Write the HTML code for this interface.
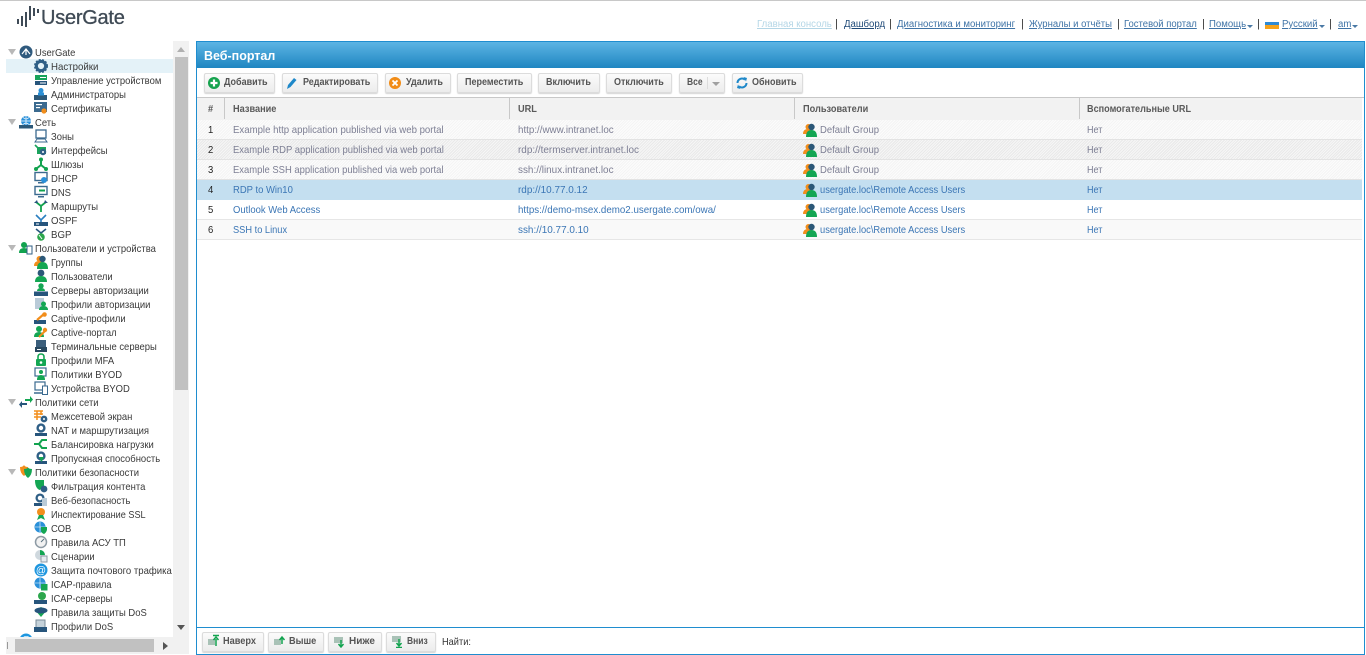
<!DOCTYPE html>
<html lang="ru"><head><meta charset="utf-8"><title>UserGate</title>
<style>
html,body{margin:0;padding:0;width:1366px;height:655px;overflow:hidden;background:#fff;font-family:"Liberation Sans",Arial,sans-serif;font-size:10.5px;color:#333}
div,span,a,svg{position:absolute;white-space:nowrap}
.r{left:6px;width:168px;height:14px;line-height:14px;color:#3a3a3a}
.r .t{left:45px;top:1px;transform:scaleX(.9);transform-origin:0 0}
.r.p .t{left:29px}
.r svg{left:28px;top:0;width:14px;height:14px}
.r.p svg{left:13px}
.r i{position:absolute;left:2px;top:4px;width:0;height:0;border:4px solid transparent;border-top:6px solid #b8b8b8;border-bottom:0}
.n{top:18px;line-height:14px;font-size:10px;color:#3f73a6;text-decoration:underline;transform:scaleX(.96);transform-origin:0 0}
.s{top:17px;line-height:14px;font-size:11px;color:#333}
.c{width:0;height:0;top:25px;border:3px solid transparent;border-top:3px solid #4a79a5;border-bottom:0}
.b{top:73px;height:18px;line-height:18px;border:1px solid #dcdcdc;border-radius:2px;background:linear-gradient(#fbfbfb,#ececec);box-shadow:0 1px 1px #d5d5d5;font-weight:bold;color:#555;font-size:10px}
.b span{top:0;transform:scaleX(.9);transform-origin:0 0}
.b svg{top:2px;left:2px;width:14px;height:14px}
.row{left:197px;width:1165px;height:20px;line-height:20px;font-size:10.3px}
.row span{top:1px;transform:scaleX(.92);transform-origin:0 0}
.row svg{left:606px;top:3px;width:14px;height:14px}
.h1{left:11px;color:#222}
.h2{left:36px}.h3{left:321px}.h4{left:623px}.h5{left:890px}
.row .h3{transform:scaleX(.965)}
.row .h5{transform:scaleX(.88)}
.off{color:#7d7f94;background:repeating-linear-gradient(135deg,#f4f4f4 0 1px,#fcfcfc 1px 2px);border-bottom:1px solid #e3e3e3;height:19px}
.off2{background:repeating-linear-gradient(135deg,#e9e9e9 0 1px,#f6f6f6 1px 2px)}
.on{color:#3b76b5;border-bottom:1px solid #e6e6e6;height:19px}
.th{top:99px;height:22px;line-height:21px;font-weight:bold;color:#5a5a5a;font-size:10px;transform:scaleX(.92);transform-origin:0 0}
.sep{top:98px;width:1px;height:21px;background:#c8c8c8}
.f{top:632px;height:18px;line-height:18px;border:1px solid #dcdcdc;border-radius:2px;background:linear-gradient(#fbfbfb,#ececec);box-shadow:0 1px 1px #d5d5d5;font-weight:bold;color:#555;font-size:10px}
.f span{top:0;transform:scaleX(.92);transform-origin:0 0}.f svg{left:4px;top:1px;width:14px;height:14px}
</style></head><body>
<svg width="0" height="0" style="left:0;top:0">
<defs>
<symbol id="gear" viewBox="0 0 14 14"><circle cx="7" cy="7" r="4.6" fill="none" stroke="#2f5f86" stroke-width="3"/><circle cx="7" cy="7" r="6.3" fill="none" stroke="#2f5f86" stroke-width="1.4" stroke-dasharray="2 1.4"/></symbol>
<symbol id="srv" viewBox="0 0 14 14"><rect x="1" y="2" width="12" height="5" fill="#17a35a"/><rect x="1" y="8" width="12" height="4" fill="#27557c"/><rect x="6" y="4" width="6" height="1" fill="#fff"/><rect x="6" y="9.5" width="6" height="1" fill="#fff"/></symbol>
<symbol id="adm" viewBox="0 0 14 14"><rect x="0" y="8" width="13" height="5" fill="#2c5878"/><circle cx="7" cy="3.5" r="2.5" fill="#2a8fd6"/><rect x="4" y="5.5" width="6" height="3" fill="#2a8fd6"/></symbol>
<symbol id="cert" viewBox="0 0 14 14"><rect x="0" y="1" width="13" height="10" fill="#3b6a8f"/><rect x="2" y="3" width="6" height="1.2" fill="#fff"/><rect x="2" y="6" width="4" height="1.2" fill="#fff"/><circle cx="10" cy="10" r="2.6" fill="#f28e1c"/></symbol>
<symbol id="ug" viewBox="0 0 14 14"><circle cx="7" cy="7" r="6.5" fill="#2f5a7e"/><path d="M3 9l4-5 4 5M7 4v6" stroke="#fff" stroke-width="1.2" fill="none"/></symbol>
<symbol id="net" viewBox="0 0 14 14"><circle cx="7" cy="6" r="5" fill="#2a90d9"/><path d="M2 6h10M7 1v10M4 2.5q3 3 6 0M4 9.5q3-3 6 0" stroke="#fff" stroke-width=".7" fill="none"/><rect x="0" y="10" width="14" height="3.5" fill="#2c5878"/></symbol>
<symbol id="zone" viewBox="0 0 14 14"><rect x="2" y="1" width="10" height="8" fill="#fff" stroke="#3b6a8f" stroke-width="1.3"/><path d="M1 13l2-3h8l2 3z" fill="#fff" stroke="#3b6a8f"/></symbol>
<symbol id="if" viewBox="0 0 14 14"><path d="M1 2l4 4" stroke="#1ba35c" stroke-width="1.6"/><rect x="3" y="4" width="9" height="7" fill="#1ba35c"/><circle cx="9" cy="9" r="3.2" fill="#2f5f86"/><circle cx="9" cy="9" r="1" fill="#fff"/></symbol>
<symbol id="gw" viewBox="0 0 14 14"><path d="M7 2v6M7 8l-5 4M7 8l5 4" stroke="#12a34f" stroke-width="2" fill="none"/><circle cx="7" cy="2.5" r="2" fill="#12a34f"/><circle cx="2" cy="12" r="2" fill="#12a34f"/><circle cx="12" cy="12" r="2" fill="#12a34f"/></symbol>
<symbol id="mon" viewBox="0 0 14 14"><rect x="1" y="1.5" width="12" height="8" fill="#fff" stroke="#3b6a8f" stroke-width="1.4"/><rect x="4" y="11" width="6" height="1.5" fill="#3b6a8f"/><circle cx="10" cy="9" r="3" fill="#2a90d9"/></symbol>
<symbol id="dns" viewBox="0 0 14 14"><rect x="1" y="1.5" width="12" height="8" fill="#fff" stroke="#3b6a8f" stroke-width="1.4"/><rect x="4" y="11" width="6" height="1.5" fill="#3b6a8f"/><path d="M5 5.5h6" stroke="#12a34f" stroke-width="2"/></symbol>
<symbol id="rt" viewBox="0 0 14 14"><path d="M7 13V7L2 3M7 7l5-4" stroke="#12a34f" stroke-width="1.8" fill="none"/><path d="M0 4l3-3 1 3zM14 4l-3-3-1 3z" fill="#27557c"/></symbol>
<symbol id="ospf" viewBox="0 0 14 14"><path d="M2 2l5 5 5-5M7 7v2" stroke="#2a7fc0" stroke-width="1.6" fill="none"/><rect x="0" y="9" width="14" height="4" fill="#27557c"/><rect x="2" y="10.5" width="3" height="1" fill="#fff"/></symbol>
<symbol id="bgp" viewBox="0 0 14 14"><path d="M2 2l5 4 5-4" stroke="#27557c" stroke-width="1.6" fill="none"/><circle cx="7" cy="10" r="3.8" fill="#2ca64c"/><path d="M5 8l3 4" stroke="#fff"/></symbol>
<symbol id="usrs" viewBox="0 0 14 14"><circle cx="5" cy="4" r="3" fill="#12a34f"/><path d="M0 12q0-5 5-5t5 5z" fill="#12a34f"/><rect x="8" y="5" width="5" height="8" fill="#fff" stroke="#2f5f86"/></symbol>
<symbol id="grp" viewBox="0 0 14 14"><circle cx="5.5" cy="4" r="3" fill="#f28e1c"/><path d="M0 11q0-5 5-5t5 5z" fill="#f28e1c"/><circle cx="8.5" cy="4" r="3.2" fill="#2c5878"/><path d="M3 14q0-7 5.5-7t5.500 7z" fill="#14a653"/></symbol>
<symbol id="usr" viewBox="0 0 14 14"><circle cx="7" cy="4" r="3.400" fill="#2c5878"/><path d="M1 13q0-6 6-6t6 6z" fill="#14a653"/></symbol>
<symbol id="usv" viewBox="0 0 14 14"><circle cx="7" cy="3" r="2.700" fill="#14a653"/><path d="M3 8q0-3 4-3t4 3z" fill="#14a653"/><rect x="0" y="8.500" width="14" height="4.500" fill="#27557c"/></symbol>
<symbol id="pa" viewBox="0 0 14 14"><rect x="1" y="1" width="9" height="11" fill="#b9cbd8"/><circle cx="9.500" cy="7" r="2.500" fill="#14a653"/><path d="M5 13q0-4 4.500-4t4.500 4z" fill="#14a653"/></symbol>
<symbol id="cp" viewBox="0 0 14 14"><rect x="0" y="9" width="12" height="4" fill="#27557c"/><path d="M3 9l7-6" stroke="#f28e1c" stroke-width="2.200"/><circle cx="10.500" cy="3.500" r="2.300" fill="#f28e1c"/></symbol>
<symbol id="cpt" viewBox="0 0 14 14"><circle cx="5" cy="4" r="3" fill="#14a653"/><path d="M0 12q0-5 5-5t5 5z" fill="#14a653"/><path d="M5 12l6-6" stroke="#f28e1c" stroke-width="2"/><circle cx="11" cy="5" r="2.200" fill="#f28e1c"/></symbol>
<symbol id="term" viewBox="0 0 14 14"><rect x="2" y="1" width="10" height="7" fill="#3b5f7c"/><rect x="1" y="8" width="12" height="5" fill="#27485f"/><rect x="3" y="10" width="4" height="1" fill="#fff"/></symbol>
<symbol id="mfa" viewBox="0 0 14 14"><path d="M4 6V4q0-3 3-3t3 3v2" stroke="#14a653" stroke-width="1.600" fill="none"/><rect x="2" y="6" width="10" height="7" rx="1" fill="#14a653"/><circle cx="7" cy="9.500" r="1.300" fill="#fff"/></symbol>
<symbol id="byod" viewBox="0 0 14 14"><rect x="1" y="1" width="11" height="8" fill="#fff" stroke="#3b6a8f" stroke-width="1.200"/><circle cx="7" cy="5" r="2" fill="#14a653"/><path d="M3 13q0-5 4-5t4 5z" fill="#14a653"/></symbol>
<symbol id="byd" viewBox="0 0 14 14"><rect x="1" y="1" width="10" height="8" fill="#fff" stroke="#3b6a8f" stroke-width="1.200"/><path d="M0 12h8" stroke="#3b6a8f" stroke-width="1.500"/><rect x="8.500" y="5" width="5" height="8.500" fill="#fff" stroke="#3b6a8f"/></symbol>
<symbol id="pol" viewBox="0 0 14 14"><path d="M6 4h5V1l3 3.500L11 8V6H6z" fill="#14a653"/><path d="M8 8H3V6l-3 3.500L3 13v-3h5z" fill="#27557c"/></symbol>
<symbol id="fw" viewBox="0 0 14 14"><path d="M0 2h9M0 5h9M0 8h7M3 2v9M7 2v4" stroke="#f28e1c" stroke-width="1.500"/><circle cx="10" cy="10" r="3.400" fill="#2f5f86"/><circle cx="10" cy="10" r="1" fill="#fff"/></symbol>
<symbol id="nat" viewBox="0 0 14 14"><circle cx="7" cy="5" r="3.400" fill="none" stroke="#2f5f86" stroke-width="2.400"/><rect x="1" y="10" width="12" height="3" fill="#27557c"/></symbol>
<symbol id="bal" viewBox="0 0 14 14"><path d="M13 3H8L5 7l3 4h5M0 7h5" stroke="#12a34f" stroke-width="2" fill="none"/></symbol>
<symbol id="bw" viewBox="0 0 14 14"><circle cx="7" cy="5" r="3.400" fill="none" stroke="#2f5f86" stroke-width="2.400"/><rect x="1" y="10" width="12" height="3" fill="#27557c"/><path d="M5 6h5l-2.500 5z" fill="#14a653"/></symbol>
<symbol id="sh" viewBox="0 0 14 14"><path d="M1 2q3 0 4-2 1 2 4 2 0 6-4 9-4-3-4-9z" fill="#f28e1c"/><path d="M5 4q3 0 4-1.500Q10 4 13 4q0 6-4 9-4-3-4-9z" fill="#14a653"/></symbol>
<symbol id="flt" viewBox="0 0 14 14"><path d="M1 1h9v6q-2 3-4.500 4Q1 9 1 1z" fill="#14a653"/><circle cx="10" cy="10" r="3.400" fill="#2f5f86"/></symbol>
<symbol id="web" viewBox="0 0 14 14"><circle cx="6" cy="5" r="3.400" fill="none" stroke="#2f5f86" stroke-width="2.300"/><rect x="0" y="10" width="8" height="3" fill="#27557c"/><rect x="8" y="5" width="5" height="8" fill="#b9cbd8"/></symbol>
<symbol id="ssl" viewBox="0 0 14 14"><circle cx="7" cy="5" r="4" fill="#f28e1c"/><path d="M3 13l2-5h4l2 5-4-2z" fill="#14a653"/></symbol>
<symbol id="ids" viewBox="0 0 14 14"><circle cx="6" cy="6" r="5.500" fill="#2a90d9"/><path d="M1 6h10M6 1v10" stroke="#fff" stroke-width=".6"/><path d="M7 6h6v3q-1 3-3 4-3-1-3-4z" fill="#14a653"/></symbol>
<symbol id="acs" viewBox="0 0 14 14"><circle cx="7" cy="7" r="5.500" fill="#f2f2f2" stroke="#8d9aa4" stroke-width="1.500"/><path d="M7 7l3-3" stroke="#59707f"/></symbol>
<symbol id="scn" viewBox="0 0 14 14"><circle cx="6" cy="6" r="5" fill="#cfd8de"/><path d="M6 6V1a5 5 0 0 1 5 5z" fill="#14a653"/><rect x="7" y="7" width="6" height="6" fill="#e6ecf0" stroke="#8d9aa4"/></symbol>
<symbol id="mail" viewBox="0 0 14 14"><circle cx="7" cy="7" r="6.500" fill="#1e96df"/><text x="7" y="10.500" text-anchor="middle" font-size="10" font-family="Liberation Sans" fill="#fff">@</text></symbol>
<symbol id="icr" viewBox="0 0 14 14"><circle cx="6" cy="6" r="5.500" fill="#2a90d9"/><path d="M1 6h10M6 1v10" stroke="#fff" stroke-width=".6"/><rect x="7" y="7" width="6.500" height="6.500" fill="#14a653"/></symbol>
<symbol id="ics" viewBox="0 0 14 14"><circle cx="8" cy="5" r="4" fill="#2ca64c"/><rect x="0" y="9" width="13" height="4" fill="#27557c"/></symbol>
<symbol id="dos" viewBox="0 0 14 14"><path d="M1 5l6-3 6 3-6 7z" fill="#14a653"/><ellipse cx="7" cy="5.500" rx="6.500" ry="3" fill="#27557c"/></symbol>
<symbol id="pdos" viewBox="0 0 14 14"><rect x="2" y="1" width="9" height="8" fill="#c5d2da" stroke="#7a8c99"/><rect x="0" y="8" width="13" height="5" fill="#27557c"/></symbol>
<symbol id="up" viewBox="0 0 14 14"><rect x="1" y="5" width="7" height="6" fill="#a9c2b7"/><path d="M9 12V5M6.500 6L9 3l2.500 3M6 1.500h6" stroke="#12a34f" stroke-width="1.500" fill="none"/></symbol>
<symbol id="up1" viewBox="0 0 14 14"><rect x="1" y="5" width="7" height="6" fill="#a9c2b7"/><path d="M9 10V4M6.500 6L9 3l2.500 3" stroke="#12a34f" stroke-width="1.500" fill="none"/></symbol>
<symbol id="dn" viewBox="0 0 14 14"><rect x="1" y="3" width="9" height="6" fill="#a9c2b7"/><path d="M8 6v6M5.500 10L8 13l2.500-3" stroke="#12a34f" stroke-width="1.500" fill="none"/></symbol>
<symbol id="dn1" viewBox="0 0 14 14"><rect x="1" y="2" width="9" height="6" fill="#a9c2b7"/><path d="M8 5v6M5.500 9L8 12l2.500-3M5 13.500h6" stroke="#12a34f" stroke-width="1.500" fill="none"/></symbol>
</defs></svg>

<div style="left:0;top:0;width:1366px;height:1px;background:#c8c8c8"></div>
<svg style="left:16px;top:4px;width:24px;height:24px" viewBox="0 0 24 24"><g fill="#3f4b57"><rect x="1" y="15" width="2" height="5"/><rect x="5" y="12" width="2" height="10"/><rect x="9" y="8" width="2" height="15"/><rect x="13" y="2" width="2" height="14"/><rect x="17" y="4" width="2" height="8"/><rect x="21" y="5" width="2" height="4"/></g></svg>
<div style="left:41px;top:6px;font-size:20px;line-height:24px;color:#3f4a55;letter-spacing:-.25px;-webkit-text-stroke:.3px #3f4a55">UserGate</div>

<a class="n" style="left:757px;color:#b4d6e6">Главная консоль</a><span class="s" style="left:835px">|</span>
<a class="n" style="left:844px;color:#1f4a78">Дашборд</a><span class="s" style="left:889px">|</span>
<a class="n" style="left:897px">Диагностика и мониторинг</a><span class="s" style="left:1021px">|</span>
<a class="n" style="left:1029px;transform:scaleX(.95)">Журналы и отчёты</a><span class="s" style="left:1117px">|</span>
<a class="n" style="left:1124px;transform:scaleX(.95)">Гостевой портал</a><span class="s" style="left:1202px">|</span>
<a class="n" style="left:1209px">Помощь</a><span class="c" style="left:1247px"></span><span class="s" style="left:1257px">|</span>
<div style="left:1265px;top:20px;width:14px;height:9px;background:linear-gradient(#fff 0 2px,#2d8ad6 2px 5px,#f5a21b 5px)"></div>
<a class="n" style="left:1282px">Русский</a><span class="c" style="left:1319px"></span><span class="s" style="left:1329px">|</span>
<a class="n" style="left:1338px">am</a><span class="c" style="left:1352px"></span>

<!-- tree -->
<div style="left:6px;top:59px;width:168px;height:14px;background:#e4f2f8"></div>
<div class="r p" style="top:45px"><i></i><svg><use href="#ug"/></svg><span class="t" style="transform:scaleX(.9)">UserGate</span></div>
<div class="r" style="top:59px"><svg><use href="#gear"/></svg><span class="t" style="transform:scaleX(.92)">Настройки</span></div>
<div class="r" style="top:73px"><svg><use href="#srv"/></svg><span class="t">Управление устройством</span></div>
<div class="r" style="top:87px"><svg><use href="#adm"/></svg><span class="t">Администраторы</span></div>
<div class="r" style="top:101px"><svg><use href="#cert"/></svg><span class="t">Сертификаты</span></div>
<div class="r p" style="top:115px"><i></i><svg><use href="#net"/></svg><span class="t">Сеть</span></div>
<div class="r" style="top:129px"><svg><use href="#zone"/></svg><span class="t">Зоны</span></div>
<div class="r" style="top:143px"><svg><use href="#if"/></svg><span class="t">Интерфейсы</span></div>
<div class="r" style="top:157px"><svg><use href="#gw"/></svg><span class="t">Шлюзы</span></div>
<div class="r" style="top:171px"><svg><use href="#mon"/></svg><span class="t" style="transform:scaleX(.9)">DHCP</span></div>
<div class="r" style="top:185px"><svg><use href="#dns"/></svg><span class="t">DNS</span></div>
<div class="r" style="top:199px"><svg><use href="#rt"/></svg><span class="t">Маршруты</span></div>
<div class="r" style="top:213px"><svg><use href="#ospf"/></svg><span class="t" style="transform:scaleX(.92)">OSPF</span></div>
<div class="r" style="top:227px"><svg><use href="#bgp"/></svg><span class="t" style="transform:scaleX(.92)">BGP</span></div>
<div class="r p" style="top:241px"><i></i><svg><use href="#usrs"/></svg><span class="t">Пользователи и устройства</span></div>
<div class="r" style="top:255px"><svg><use href="#grp"/></svg><span class="t">Группы</span></div>
<div class="r" style="top:269px"><svg><use href="#usr"/></svg><span class="t">Пользователи</span></div>
<div class="r" style="top:283px"><svg><use href="#usv"/></svg><span class="t">Серверы авторизации</span></div>
<div class="r" style="top:297px"><svg><use href="#pa"/></svg><span class="t">Профили авторизации</span></div>
<div class="r" style="top:311px"><svg><use href="#cp"/></svg><span class="t">Captive-профили</span></div>
<div class="r" style="top:325px"><svg><use href="#cpt"/></svg><span class="t">Captive-портал</span></div>
<div class="r" style="top:339px"><svg><use href="#term"/></svg><span class="t">Терминальные серверы</span></div>
<div class="r" style="top:353px"><svg><use href="#mfa"/></svg><span class="t">Профили MFA</span></div>
<div class="r" style="top:367px"><svg><use href="#byod"/></svg><span class="t">Политики BYOD</span></div>
<div class="r" style="top:381px"><svg><use href="#byd"/></svg><span class="t">Устройства BYOD</span></div>
<div class="r p" style="top:395px"><i></i><svg><use href="#pol"/></svg><span class="t">Политики сети</span></div>
<div class="r" style="top:409px"><svg><use href="#fw"/></svg><span class="t">Межсетевой экран</span></div>
<div class="r" style="top:423px"><svg><use href="#nat"/></svg><span class="t">NAT и маршрутизация</span></div>
<div class="r" style="top:437px"><svg><use href="#bal"/></svg><span class="t">Балансировка нагрузки</span></div>
<div class="r" style="top:451px"><svg><use href="#bw"/></svg><span class="t">Пропускная способность</span></div>
<div class="r p" style="top:465px"><i></i><svg><use href="#sh"/></svg><span class="t">Политики безопасности</span></div>
<div class="r" style="top:479px"><svg><use href="#flt"/></svg><span class="t">Фильтрация контента</span></div>
<div class="r" style="top:493px"><svg><use href="#web"/></svg><span class="t">Веб-безопасность</span></div>
<div class="r" style="top:507px"><svg><use href="#ssl"/></svg><span class="t" style="transform:scaleX(.87)">Инспектирование SSL</span></div>
<div class="r" style="top:521px"><svg><use href="#ids"/></svg><span class="t">СОВ</span></div>
<div class="r" style="top:535px"><svg><use href="#acs"/></svg><span class="t">Правила АСУ ТП</span></div>
<div class="r" style="top:549px"><svg><use href="#scn"/></svg><span class="t">Сценарии</span></div>
<div class="r" style="top:563px"><svg><use href="#mail"/></svg><span class="t" style="transform:scaleX(.91)">Защита почтового трафика</span></div>
<div class="r" style="top:577px"><svg><use href="#icr"/></svg><span class="t" style="transform:scaleX(.88)">ICAP-правила</span></div>
<div class="r" style="top:591px"><svg><use href="#ics"/></svg><span class="t" style="transform:scaleX(.88)">ICAP-серверы</span></div>
<div class="r" style="top:605px"><svg><use href="#dos"/></svg><span class="t">Правила защиты DoS</span></div>
<div class="r" style="top:619px"><svg><use href="#pdos"/></svg><span class="t">Профили DoS</span></div>
<div class="r p" style="top:633px"><svg><use href="#mail"/></svg><span class="t">Оповещения</span></div>
<!-- scrollbars -->
<div style="left:173px;top:41px;width:16px;height:596px;background:#f1f1f1"></div>
<div style="left:175px;top:57px;width:13px;height:333px;background:#c1c1c1"></div>
<div style="left:177px;top:47px;border:4px solid transparent;border-bottom:5px solid #b0b0b0;border-top:0"></div>
<div style="left:177px;top:625px;border:4px solid transparent;border-top:5px solid #555;border-bottom:0"></div>
<div style="left:6px;top:637px;width:183px;height:17px;background:#f1f1f1"></div>
<div style="left:15px;top:639px;width:139px;height:13px;background:#c1c1c1"></div>
<div style="left:7px;top:642px;width:1px;height:7px;background:#999"></div>
<div style="left:163px;top:642px;border:4px solid transparent;border-left:5px solid #555;border-right:0"></div>

<!-- panel -->
<div style="left:196px;top:41px;width:1167px;height:612px;border:1px solid #1f8dcf;background:#fff"></div>
<div style="left:197px;top:42px;width:1167px;height:26px;background:linear-gradient(#5cb4e4,#1f86c1)"></div>
<div style="left:204px;top:47px;font-size:13px;line-height:17px;font-weight:bold;color:#fff;transform:scaleX(.96);transform-origin:0 0">Веб-портал</div>

<div class="b" style="left:204px;width:69px"><svg><circle cx="7" cy="7" r="6" fill="#17a34f"/><path d="M7 3.500v7M3.500 7h7" stroke="#fff" stroke-width="2.200"/></svg><span style="left:19px">Добавить</span></div>
<div class="b" style="left:282px;width:94px"><svg style="left:1px"><path d="M3 13l1-4 6-7 2.500 2-6 7z" fill="#1e88c9"/></svg><span style="left:20px">Редактировать</span></div>
<div class="b" style="left:385px;width:64px"><svg><circle cx="7" cy="7" r="6" fill="#f18c17"/><path d="M4.500 4.500l5 5M9.500 4.500l-5 5" stroke="#fff" stroke-width="1.800"/></svg><span style="left:20px">Удалить</span></div>
<div class="b" style="left:457px;width:73px"><span style="left:7px">Переместить</span></div>
<div class="b" style="left:538px;width:60px"><span style="left:7px">Включить</span></div>
<div class="b" style="left:606px;width:64px"><span style="left:7px">Отключить</span></div>
<div class="b" style="left:679px;width:44px"><span style="left:7px;transform:scaleX(.85)">Все</span><span style="left:27px;top:3px;width:1px;height:12px;background:#ddd;transform:none"></span><span style="left:32px;top:8px;border:4px solid transparent;border-top:4px solid #a0a0a0;border-bottom:0;transform:none"></span></div>
<div class="b" style="left:732px;width:69px"><svg><path d="M2.500 7a4.500 4.500 0 0 1 7.500-3.300M11.500 7A4.500 4.500 0 0 1 4 10.300" stroke="#1e88c9" stroke-width="2" fill="none"/><path d="M8.500 1l3.500 1-1 3.500zM5.500 13L2 12l1-3.500z" fill="#1e88c9"/></svg><span style="left:19px">Обновить</span></div>

<div style="left:197px;top:97px;width:1167px;height:1px;background:#c8c8c8"></div>
<div style="left:197px;top:98px;width:1165px;height:22px;background:#f2f2f2"></div>
<span class="th" style="left:208px">#</span><span class="sep" style="left:224px"></span>
<span class="th" style="left:233px">Название</span><span class="sep" style="left:509px"></span>
<span class="th" style="left:518px">URL</span><span class="sep" style="left:794px"></span>
<span class="th" style="left:803px">Пользователи</span><span class="sep" style="left:1079px"></span>
<span class="th" style="left:1087px;transform:scaleX(.91)">Вспомогательные URL</span>

<div class="row off" style="top:120px"><span class="h1">1</span><span class="h2" style="transform:scaleX(.934)">Example http application published via web portal</span><span class="h3" style="transform:scaleX(.95)">http://www.intranet.loc</span><svg><use href="#grp"/></svg><span class="h4">Default Group</span><span class="h5">Нет</span></div>
<div class="row off off2" style="top:140px"><span class="h1">2</span><span class="h2" style="transform:scaleX(.917)">Example RDP application published via web portal</span><span class="h3">rdp://termserver.intranet.loc</span><svg><use href="#grp"/></svg><span class="h4">Default Group</span><span class="h5">Нет</span></div>
<div class="row off" style="top:160px"><span class="h1">3</span><span class="h2" style="transform:scaleX(.917)">Example SSH application published via web portal</span><span class="h3">ssh://linux.intranet.loc</span><svg><use href="#grp"/></svg><span class="h4">Default Group</span><span class="h5">Нет</span></div>
<div class="row on" style="top:180px;background:#c4dff0;border-bottom:1px solid #c4dff0"><span class="h1">4</span><span class="h2">RDP to Win10</span><span class="h3">rdp://10.77.0.12</span><svg><use href="#grp"/></svg><span class="h4" style="transform:scaleX(.906)">usergate.loc\Remote Access Users</span><span class="h5">Нет</span></div>
<div class="row on" style="top:200px"><span class="h1">5</span><span class="h2">Outlook Web Access</span><span class="h3" style="transform:scaleX(.947)">https://demo-msex.demo2.usergate.com/owa/</span><svg><use href="#grp"/></svg><span class="h4" style="transform:scaleX(.906)">usergate.loc\Remote Access Users</span><span class="h5">Нет</span></div>
<div class="row on" style="top:220px;background:#f9f9f9"><span class="h1">6</span><span class="h2" style="transform:scaleX(.9)">SSH to Linux</span><span class="h3">ssh://10.77.0.10</span><svg><use href="#grp"/></svg><span class="h4" style="transform:scaleX(.906)">usergate.loc\Remote Access Users</span><span class="h5">Нет</span></div>

<div style="left:197px;top:627px;width:1167px;height:1px;background:#1f8dcf"></div>
<div class="f" style="left:202px;width:60px"><svg><use href="#up"/></svg><span style="left:20px">Наверх</span></div>
<div class="f" style="left:268px;width:54px"><svg><use href="#up1"/></svg><span style="left:20px">Выше</span></div>
<div class="f" style="left:328px;width:52px"><svg><use href="#dn"/></svg><span style="left:20px;transform:none">Ниже</span></div>
<div class="f" style="left:386px;width:48px"><svg><use href="#dn1"/></svg><span style="left:20px;transform:scaleX(.85)">Вниз</span></div>
<div style="left:442px;top:633px;line-height:18px;font-size:10.5px;color:#333;transform:scaleX(.88);transform-origin:0 0">Найти:</div>
</body></html>
